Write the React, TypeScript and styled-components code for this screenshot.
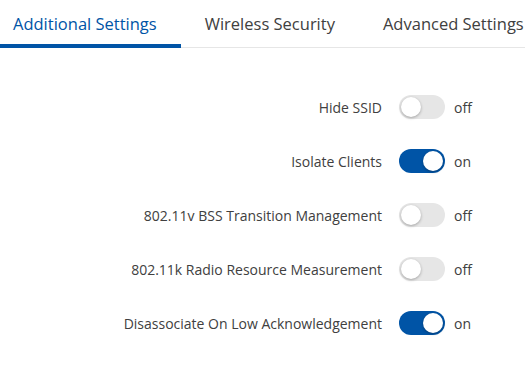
import React, { useState } from 'react';
import styled, { createGlobalStyle } from 'styled-components';

const GlobalStyle = createGlobalStyle`
  html, body {
    margin: 0;
    padding: 0;
    background: #ffffff;
  }
  body {
    font-family: 'Open Sans', 'Noto Sans', sans-serif;
    color: #404040;
  }
`;

const Page = styled.div`
  width: 525px;
  height: 384px;
  overflow: hidden;
`;

const TabBar = styled.div`
  display: flex;
  border-bottom: 1px solid #e6e6e6;
`;

const Tab = styled.button<{ active?: boolean; first?: boolean }>`
  box-sizing: border-box;
  height: 48px;
  margin: 0 0 -1px;
  padding: 3px 24px 0 ${props => (props.first ? '13px' : '24px')};
  border: 0;
  border-bottom: 4px solid ${props => (props.active ? '#0054a6' : 'transparent')};
  background: none;
  font-family: inherit;
  font-size: 16.5px;
  white-space: nowrap;
  color: ${props => (props.active ? '#0054a6' : '#404040')};
  cursor: pointer;
`;

const Rows = styled.div`
  padding-top: 32px;
`;

const Row = styled.div`
  display: flex;
  align-items: center;
  height: 54px;
`;

const Label = styled.span`
  width: 382px;
  text-align: right;
  font-size: 14px;
  color: #404040;
`;

const Track = styled.button<{ on: boolean }>`
  position: relative;
  box-sizing: border-box;
  width: 46px;
  height: 24px;
  margin-left: 17px;
  padding: 0;
  border: 0;
  border-radius: 12px;
  background: ${props => (props.on ? '#0054a6' : '#e6e6e6')};
  cursor: pointer;
`;

const Knob = styled.span<{ on: boolean }>`
  position: absolute;
  top: 2px;
  left: ${props => (props.on ? '24px' : '2px')};
  width: 20px;
  height: 20px;
  border-radius: 50%;
  background: #ffffff;
  box-shadow: 0 1px 3px rgba(0, 0, 0, 0.3);
`;

const Status = styled.span`
  margin-left: 9px;
  font-size: 14px;
  color: #404040;
`;

const tabs = ['Additional Settings', 'Wireless Security', 'Advanced Settings'];

const initial = [
  { label: 'Hide SSID', on: false },
  { label: 'Isolate Clients', on: true },
  { label: '802.11v BSS Transition Management', on: false },
  { label: '802.11k Radio Resource Measurement', on: false },
  { label: 'Disassociate On Low Acknowledgement', on: true },
];

export default function App() {
  const [active, setActive] = useState(0);
  const [settings, setSettings] = useState(initial);

  const toggle = (i: number) =>
    setSettings(s => s.map((item, j) => (j === i ? { ...item, on: !item.on } : item)));

  return (
    <Page>
      <GlobalStyle />
      <TabBar>
        {tabs.map((t, i) => (
          <Tab key={t} first={i === 0} active={i === active} onClick={() => setActive(i)}>
            {t}
          </Tab>
        ))}
      </TabBar>
      <Rows>
        {settings.map((s, i) => (
          <Row key={s.label}>
            <Label>{s.label}</Label>
            <Track on={s.on} onClick={() => toggle(i)}>
              <Knob on={s.on} />
            </Track>
            <Status>{s.on ? 'on' : 'off'}</Status>
          </Row>
        ))}
      </Rows>
    </Page>
  );
}
